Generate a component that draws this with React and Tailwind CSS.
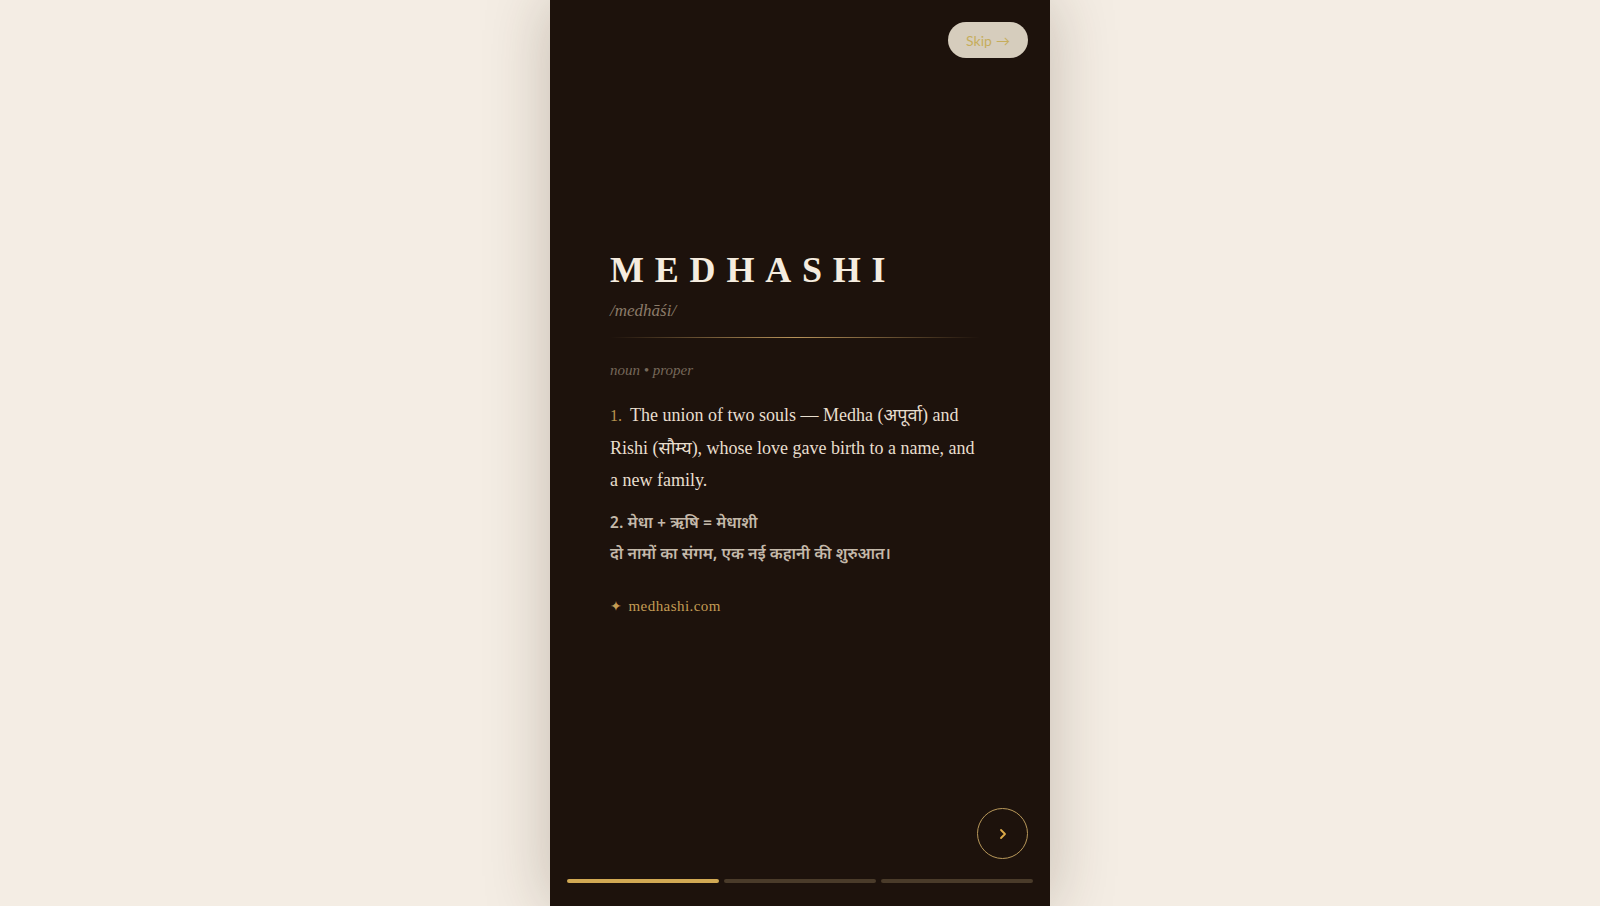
import React from "react";

export default function App() {
  const serif = { fontFamily: '"Liberation Serif", "DejaVu Serif", "Noto Sans Devanagari", "Noto Sans", serif' };
  return (
    <div className="min-h-screen w-full bg-[#f4ede4] flex justify-center">
      <div
        className="relative w-[500px] h-[906px] bg-[#1d120c] flex flex-col shadow-[0_0_60px_rgba(60,40,20,0.25)]"
        style={serif}
      >
        <div className="flex justify-end pt-[22px] pr-[22px]">
          <button
            className="h-[36px] w-[80px] rounded-full bg-[#d6cdbd] text-[#c6ad5c] text-[14px] flex items-center justify-center gap-1"
            style={{ fontFamily: '"Lato", "Noto Sans", sans-serif' }}
          >
            Skip <span className="text-[14px]">→</span>
          </button>
        </div>

        <div className="px-[60px] mt-[194px]">
          <h1 className="text-[36px] leading-none font-bold tracking-[0.3em] text-[#f5ecdf]">MEDHASHI</h1>
          <div className="mt-[10px] text-[17px] italic text-[#8b7b69]">/medhāśi/</div>
          <div className="mt-[13px] h-px w-[370px] bg-gradient-to-r from-transparent via-[#b8935a] to-transparent"></div>
          <div className="mt-[21px] text-[15px] italic text-[#76685a]">noun • proper</div>
          <p className="mt-[18px] text-[18px] leading-[32px] text-[#e8dece] w-[372px]">
            <span className="text-[#b89550] text-[16px] mr-[8px]">1.</span>The union of two souls — Medha (अपूर्वा) and Rishi (सौम्य), whose love gave birth to a name, and a new family.
          </p>
          <div
            className="mt-[13px] text-[16px] leading-[31px] font-semibold text-[#c4b9aa]"
            style={{ fontFamily: '"Noto Sans Devanagari", "Noto Sans", "Liberation Sans", sans-serif' }}
          >
            <div>2. मेधा + ऋषि = मेधाशी</div>
            <div>दो नामों का संगम, एक नई कहानी की शुरुआत।</div>
          </div>
          <div className="mt-[24px] text-[15px] tracking-[0.03em] text-[#c49c54] flex items-center gap-[6px]">
            <span className="text-[14px]">✦</span>
            <span>medhashi.com</span>
          </div>
        </div>

        <div className="mt-auto flex justify-end pr-[22px]">
          <button className="w-[51px] h-[51px] rounded-full border border-[#b8985a] flex items-center justify-center">
            <svg width="10" height="14" viewBox="0 0 10 14" fill="none">
              <path d="M3 3 L7 7 L3 11" stroke="#dcaa48" strokeWidth="1.8" strokeLinecap="round" strokeLinejoin="round" />
            </svg>
          </button>
        </div>

        <div className="flex gap-[5px] px-[17px] mt-[20px] mb-[23px]">
          <div className="h-[4px] flex-1 rounded-full bg-[#d1a954]"></div>
          <div className="h-[4px] flex-1 rounded-full bg-[#4a3b2a]"></div>
          <div className="h-[4px] flex-1 rounded-full bg-[#4a3b2a]"></div>
        </div>
      </div>
    </div>
  );
}
